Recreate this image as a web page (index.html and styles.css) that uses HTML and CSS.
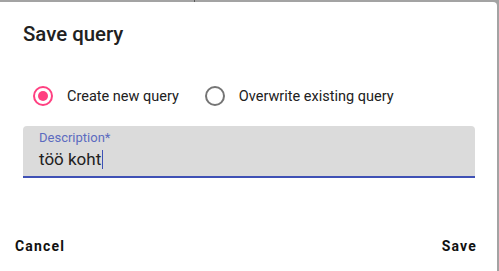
FILE: index.html
```html
<!DOCTYPE html>
<html>
<head>
<meta charset="utf-8">
<link rel="stylesheet" href="styles.css">
</head>
<body>
<div class="backdrop-strip"><div class="strip-left"></div></div>
<div class="dialog">
  <h2 class="title">Save query</h2>
  <div class="radio-group">
    <label class="radio">
      <span class="radio-circle checked"><span class="radio-dot"></span></span>
      <span class="radio-label">Create new query</span>
    </label>
    <label class="radio">
      <span class="radio-circle"></span>
      <span class="radio-label">Overwrite existing query</span>
    </label>
  </div>
  <div class="field">
    <div class="field-label">Description*</div>
    <div class="field-value">töö koht<span class="caret"></span></div>
  </div>
  <div class="actions">
    <button class="btn">Cancel</button>
    <button class="btn">Save</button>
  </div>
</div>
</body>
</html>
```
FILE: styles.css
```css
html, body {
  margin: 0;
  padding: 0;
}
body {
  width: 499px;
  height: 271px;
  overflow: hidden;
  background: #a3a3a3;
  font-family: Roboto, "Liberation Sans", sans-serif;
  color: #212121;
}
.backdrop-strip {
  height: 2px;
  display: flex;
}
.strip-left {
  width: 194px;
  border-right: 1px solid #5a5a5a;
}
.dialog {
  width: 497px;
  height: 269px;
  background: #fff;
  border-top-right-radius: 4px;
  box-sizing: border-box;
  padding: 0 24px 0 23px;
  display: flex;
  flex-direction: column;
}
.title {
  margin: 0;
  padding-top: 18px;
  font-size: 20.4px;
  font-weight: 500;
  line-height: 28px;
  color: #212121;
}
.radio-group {
  display: flex;
  align-items: center;
  margin-top: 28px;
  height: 40px;
}
.radio {
  display: flex;
  align-items: center;
  margin-right: 16px;
}
.radio-circle {
  width: 20px;
  height: 20px;
  box-sizing: border-box;
  border: 2px solid #757575;
  border-radius: 50%;
  margin: 0 14px 0 10px;
  display: flex;
  align-items: center;
  justify-content: center;
}
.radio-circle.checked {
  border-color: #ff4081;
}
.radio-dot {
  width: 10px;
  height: 10px;
  border-radius: 50%;
  background: #ff4081;
}
.radio-label {
  font-size: 14.5px;
  color: #212121;
}
.field {
  margin-top: 10px;
  width: 452px;
  height: 52px;
  box-sizing: border-box;
  background: #dbdbdb;
  border-radius: 4px 4px 0 0;
  border-bottom: 2px solid #3f51b5;
  padding: 3px 16px 0;
}
.field-label {
  font-size: 13px;
  line-height: 17px;
  color: #5c6bc0;
}
.field-value {
  margin-top: 2px;
  font-size: 17px;
  line-height: 22px;
  color: #212121;
  display: flex;
  align-items: center;
}
.caret {
  display: inline-block;
  width: 1px;
  height: 19px;
  background: #3f51b5;
  margin-left: 1px;
}
.actions {
  margin-top: auto;
  margin-bottom: 15px;
  margin-left: -8px;
  margin-right: -4px;
  display: flex;
  justify-content: space-between;
}
.btn {
  border: none;
  background: none;
  font-family: Roboto, "Liberation Sans", sans-serif;
  font-size: 14px;
  font-weight: 700;
  letter-spacing: 1.2px;
  color: #111;
  padding: 0;
  line-height: 20px;
}
```
